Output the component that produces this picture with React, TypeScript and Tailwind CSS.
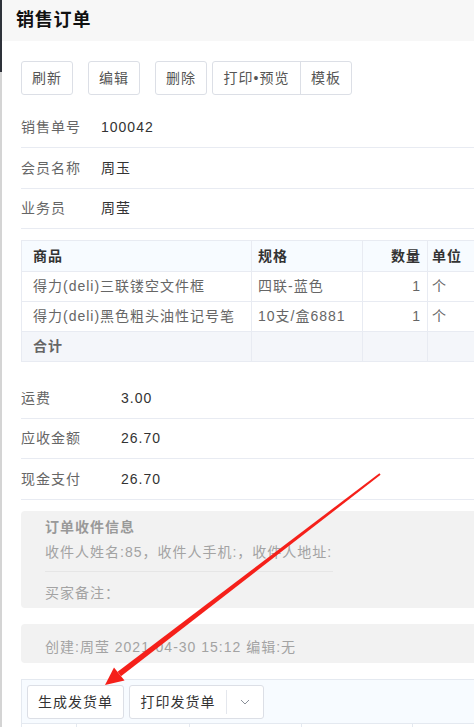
import React from 'react';

const font = { fontFamily: '"Liberation Sans", "Noto Sans CJK SC", sans-serif' };

const InfoRow: React.FC<{ label: string; value: string; valueX: string; h?: string }> = ({ label, value, valueX, h }) => (
    <div className={`flex items-center border-b border-[#e8ebf2] ${h || 'h-[41px]'}`}>
        <span className={`text-[14px] text-[#666] ${valueX}`}>{label}</span>
        <span className="text-[14px] text-[#333]">{value}</span>
    </div>
);

const Btn: React.FC<{ children: React.ReactNode; w: string; className?: string }> = ({ children, w, className }) => (
    <button className={`h-[34px] ${w} border border-[#dcdfe6] rounded-[3px] bg-white text-[14px] text-[#555] flex items-center justify-center ${className || ''}`}>
        {children}
    </button>
);

const rows = [
    { name: '得力(deli)三联镂空文件框', spec: '四联-蓝色', qty: '1', unit: '个' },
    { name: '得力(deli)黑色粗头油性记号笔', spec: '10支/盒6881', qty: '1', unit: '个' },
];

const Arrow: React.FC = () => (
    <svg className="absolute left-0 top-0 pointer-events-none" width="474" height="727" viewBox="0 0 474 727">
        <polygon points="380.6,474.8 379.4,473.2 117.6,671.8 121,676.2" fill="#f5201a" />
        <polygon points="105,685 114,667.5 124.5,680.5" fill="#f5201a" />
    </svg>
);

const App: React.FC = () => {
    return (
        <div className="relative w-[474px] h-[727px] overflow-hidden bg-white flex tracking-[1px]" style={font}>
            {/* left strip of page behind */}
            <div className="w-[2px] flex flex-col shrink-0">
                <div className="h-[72px] bg-[#2e323a]"></div>
                <div className="flex-1 bg-[#d4d4d4]"></div>
            </div>

            <div className="flex-1 min-w-0">
                <div className="h-[41px] bg-[#f7f7f7] flex items-center pl-[14px]">
                    <h1 className="text-[18px] font-bold text-[#111] tracking-[0.8px]">销售订单</h1>
                </div>

                <div className="pl-[19px]">
                    {/* toolbar */}
                    <div className="flex items-center mt-[20px]">
                        <Btn w="w-[52px]">刷新</Btn>
                        <Btn w="w-[52px]" className="ml-[15px]">编辑</Btn>
                        <Btn w="w-[52px]" className="ml-[15px]">删除</Btn>
                        <div className="flex ml-[5px] h-[34px] border border-[#dcdfe6] rounded-[3px]">
                            <span className="w-[88px] flex items-center justify-center text-[14px] text-[#555] border-r border-[#dcdfe6]">打印•预览</span>
                            <span className="w-[50px] flex items-center justify-center text-[14px] text-[#555]">模板</span>
                        </div>
                    </div>

                    <div className="mt-[12px]">
                        <InfoRow label="销售单号" value="100042" valueX="w-[80px]" />
                        <InfoRow label="会员名称" value="周玉" valueX="w-[80px]" />
                        <InfoRow label="业务员" value="周莹" valueX="w-[80px]" h="h-[40px]" />
                    </div>

                    {/* goods table */}
                    <div className="mt-[11px] w-[520px] border border-[#e8ebf2] text-[14px]">
                        <div className="flex h-[31px] bg-[#f7fbff] font-bold text-[#333] border-b border-[#e8ebf2]">
                            <div className="w-[230px] pl-[11px] flex items-center border-r border-[#e8ebf2]">商品</div>
                            <div className="w-[111px] pl-[6px] flex items-center border-r border-[#e8ebf2]">规格</div>
                            <div className="w-[65px] pr-[6px] flex items-center justify-end border-r border-[#e8ebf2]">数量</div>
                            <div className="flex-1 pl-[4px] flex items-center">单位</div>
                        </div>
                        {rows.map(r => (
                            <div key={r.name} className="flex h-[30px] text-[#666] border-b border-[#e8ebf2]">
                                <div className="w-[230px] pl-[11px] flex items-center border-r border-[#e8ebf2] whitespace-nowrap overflow-hidden">{r.name}</div>
                                <div className="w-[111px] pl-[6px] flex items-center border-r border-[#e8ebf2] whitespace-nowrap">{r.spec}</div>
                                <div className="w-[65px] pr-[6px] flex items-center justify-end border-r border-[#e8ebf2]">{r.qty}</div>
                                <div className="flex-1 pl-[4px] flex items-center">{r.unit}</div>
                            </div>
                        ))}
                        <div className="flex h-[29px] bg-[#f4f6fa] font-bold text-[#666]">
                            <div className="w-[230px] pl-[11px] flex items-center border-r border-[#e8ebf2]">合计</div>
                            <div className="w-[111px] border-r border-[#e8ebf2]"></div>
                            <div className="w-[65px] border-r border-[#e8ebf2]"></div>
                            <div className="flex-1"></div>
                        </div>
                    </div>

                    <div className="mt-[16px]">
                        <InfoRow label="运费" value="3.00" valueX="w-[100px]" />
                        <InfoRow label="应收金额" value="26.70" valueX="w-[100px]" h="h-[40px]" />
                        <InfoRow label="现金支付" value="26.70" valueX="w-[100px]" />
                    </div>

                    {/* receiver info */}
                    <div className="mt-[11px] bg-[#f2f2f2] rounded-l-[4px] pl-[24px] pt-[6px] pb-[5px] text-[14px]">
                        <div className="leading-[20px] font-bold text-[#999]">订单收件信息</div>
                        <div className="leading-[20px] mt-[5px] text-[#a3a3a3] whitespace-nowrap">收件人姓名:85，收件人手机:，收件人地址:</div>
                        <div className="mt-[9px] w-[288px] border-t border-[#e6e6e6]"></div>
                        <div className="leading-[20px] mt-[11px] text-[#a3a3a3]">买家备注：</div>
                    </div>

                    <div className="mt-[16px] h-[39px] bg-[#f2f2f2] rounded-l-[4px] pl-[24px] pt-[13px] text-[14px] leading-[20px] text-[#a3a3a3] whitespace-nowrap">
                        创建:周莹 2021-04-30 15:12 编辑:无
                    </div>

                    {/* shipping toolbar */}
                    <div className="mt-[16px] border border-[#e4e9f0] bg-[#f7fbff] w-[520px]">
                        <div className="flex items-center pl-[5px] pt-[5px] pb-[4px]">
                            <button className="h-[34px] w-[97px] border border-[#dcdfe6] rounded-[3px] bg-white text-[14px] text-[#333] flex items-center justify-center">生成发货单</button>
                            <div className="ml-[5px] h-[34px] w-[135px] border border-[#dcdfe6] rounded-[3px] bg-white flex items-center">
                                <span className="w-[96px] text-center text-[14px] text-[#333]">打印发货单</span>
                                <span className="h-[24px] border-l border-[#e4e7ed]"></span>
                                <span className="flex-1 flex items-center justify-center">
                                    <svg width="10" height="6" viewBox="0 0 10 6">
                                        <path d="M1 1 L5 5 L9 1" fill="none" stroke="#8a9099" strokeWidth="1" />
                                    </svg>
                                </span>
                            </div>
                        </div>
                        <div className="flex h-[20px] border-t border-[#e4e9f0] bg-white">
                            <div className="w-[55px] border-r border-[#e4e9f0]"></div>
                            <div className="w-[113px] border-r border-[#e4e9f0]"></div>
                            <div className="w-[112px] border-r border-[#e4e9f0]"></div>
                            <div className="w-[111px] border-r border-[#e4e9f0]"></div>
                            <div className="flex-1"></div>
                        </div>
                    </div>
                </div>
            </div>

            <Arrow />
        </div>
    );
};

export default App;
